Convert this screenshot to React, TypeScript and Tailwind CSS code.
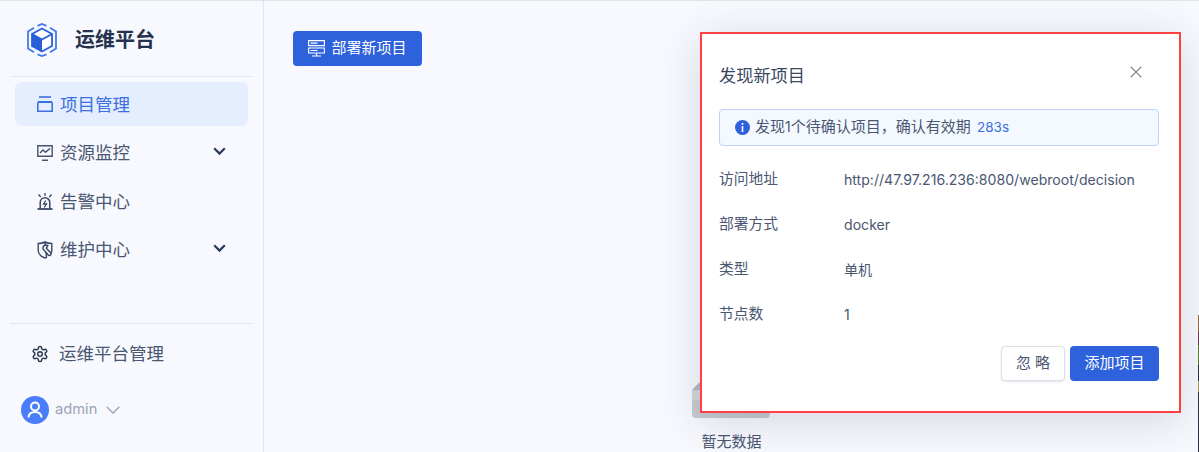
import React from "react";

const font = { fontFamily: '"Inter","Noto Sans CJK SC",sans-serif' };

function Chevron() {
  return (
    <svg width="13" height="9" viewBox="0 0 13 9" className="mb-[3px] text-[#2a3a5c]">
      <path d="M1.200 1.300 6.500 6.600l5.300-5.300" fill="none" stroke="currentColor" strokeWidth="2.200" />
    </svg>
  );
}

function NavItem({ icon, label, chevron, active }: { icon: React.ReactNode; label: string; chevron?: boolean; active?: boolean }) {
  return (
    <div className={`flex h-11 items-center rounded-md pl-[22px] pr-[22px] text-[17.500px] ${active ? "bg-[#e4eefe] text-[#3c6fe0]" : "text-[#4a5772]"}`}>
      <span className="flex w-[16px] justify-center">{icon}</span>
      <span className="ml-[7px] flex-1 pt-[1px] leading-none">{label}</span>
      {chevron && <Chevron />}
    </div>
  );
}

export default function App() {
  return (
    <div style={font} className="relative flex h-[452px] w-[1199px] overflow-hidden border-t border-[#e2e3e5] bg-[#f8f9fe]">
      <aside className="flex w-[264px] shrink-0 flex-col border-r border-[#e3e5ec]">
        <div className="mx-[10px] flex h-[76px] items-center border-b border-[#e8eaf0] pl-[17px] pt-[2px]">
          <svg width="30" height="34" viewBox="0 0 30 34">
            <path d="M10.500 2.800 15 1l4.500 1.800M23 4.800 29 8.500v17l-6 3.700M19.500 31.300 15 33l-4.500-1.700M7 29.200 1 25.500v-17l6-3.700" fill="none" stroke="#4378ee" strokeWidth="1.800" />
            <path d="M15 5.500 25 11v12l-10 5.500L5 23V11z" fill="#fff" stroke="#2a5fd8" strokeWidth="1.800" />
            <path d="M5 11l10 5.500v12L5 23z" fill="#2a5fd8" />
            <path d="M5 11l10 5.500L25 11" fill="none" stroke="#2a5fd8" strokeWidth="1.800" />
          </svg>
          <span className="ml-[18px] text-[20px] font-bold text-[#25324f]">运维平台</span>
        </div>
        <nav className="mx-[15px] mt-[5px] flex flex-col gap-[4.500px]">
          <NavItem
            active
            label="项目管理"
            icon={
              <svg width="16" height="16" viewBox="0 0 16 16" fill="none" stroke="#3c6fe0" strokeWidth="1.600">
                <path d="M2 1h12" />
                <path d="M.8 6.500V15.200h14.400V6.500" />
                <path d="M.8 6h14.400" strokeWidth="2" />
              </svg>
            }
          />
          <NavItem
            label="资源监控"
            chevron
            icon={
              <svg width="16" height="16" viewBox="0 0 16 16" fill="none" stroke="#46536f" strokeWidth="1.400">
                <path d="M.8.800h14.400v10.400H.8z" />
                <path d="M5 15.300h6" strokeWidth="1.600" />
                <path d="M3 8l3-3 2.500 2.200L13 3.500" strokeWidth="1.500" />
              </svg>
            }
          />
          <NavItem
            label="告警中心"
            icon={
              <svg width="16" height="17" viewBox="0 0 16 17" fill="none" stroke="#3a4763" strokeWidth="1.500">
                <path d="M3.200 15.500V9.500a4.800 4.800 0 0 1 9.600 0v6" />
                <path d="M.5 16h15" strokeWidth="1.800" />
                <path d="M8 0v3M1.500 1.500l2.200 2.500M14.500 1.500l-2.200 2.500" strokeWidth="1.300" />
                <path d="M8.800 7.500 6.500 11h3L7.200 14.500" strokeWidth="1.300" />
              </svg>
            }
          />
          <NavItem
            label="维护中心"
            chevron
            icon={
              <svg width="16" height="18" viewBox="0 0 16 18" fill="none" stroke="#3a4763" strokeWidth="1.400">
                <path d="M8 1c2 1 4 1.500 6.800 1.500V9c0 1.200-.3 2.300-.8 3.300M9.500 16.300 8 17c-3.800-1.300-6.800-4.200-6.800-8V2.500C4 2.500 6 2 8 1z" />
                <path d="M10.800 4.700a3 3 0 0 0-4.600 3.500l5 5.800c.6.700 1.500.7 2.100.1l.3-.3c.6-.6.6-1.400 0-2l-4.300-4.600 1.500-2.500z" fill="#f8f9fe" strokeWidth="1.500" />
              </svg>
            }
          />
        </nav>
        <div className="mx-[10px] mt-[51px] border-t border-[#e3e5ec] pt-[21px]">
          <div className="flex items-center pl-[21px] text-[17.500px] leading-none text-[#4a5772]">
            <svg width="18" height="18" viewBox="0 0 24 24" fill="none" stroke="#2f3b55" strokeWidth="2">
              <path d="M12.220 2h-.440a2 2 0 0 0-2 2v.180a2 2 0 0 1-1 1.730l-.430.250a2 2 0 0 1-2 0l-.150-.080a2 2 0 0 0-2.730.730l-.220.380a2 2 0 0 0 .730 2.730l.150.100a2 2 0 0 1 1 1.720v.510a2 2 0 0 1-1 1.740l-.150.090a2 2 0 0 0-.730 2.730l.220.380a2 2 0 0 0 2.730.730l.150-.080a2 2 0 0 1 2 0l.430.250a2 2 0 0 1 1 1.730V20a2 2 0 0 0 2 2h.440a2 2 0 0 0 2-2v-.180a2 2 0 0 1 1-1.730l.430-.250a2 2 0 0 1 2 0l.150.080a2 2 0 0 0 2.730-.730l.220-.390a2 2 0 0 0-.730-2.730l-.150-.080a2 2 0 0 1-1-1.740v-.500a2 2 0 0 1 1-1.740l.150-.090a2 2 0 0 0 .730-2.730l-.220-.380a2 2 0 0 0-2.730-.730l-.150.080a2 2 0 0 1-2 0l-.430-.250a2 2 0 0 1-1-1.730V4a2 2 0 0 0-2-2z" />
              <circle cx="12" cy="12" r="3" />
            </svg>
            <span className="ml-[10px]">运维平台管理</span>
          </div>
          <div className="ml-[11px] mt-[33px] flex items-center">
            <svg width="28" height="28" viewBox="0 0 28 28">
              <circle cx="14" cy="14" r="14" fill="#4a7dfb" />
              <circle cx="14" cy="10.500" r="4" fill="none" stroke="#fff" strokeWidth="2" />
              <path d="M7.500 21.500c.3-3.700 2.700-5.500 6.500-5.500s6.200 1.800 6.500 5.500" fill="none" stroke="#fff" strokeWidth="2" />
            </svg>
            <span className="ml-[6px] text-[14.700px] text-[#9aa3b5]">admin</span>
            <svg width="14" height="8" viewBox="0 0 14 8" className="ml-[9px]">
              <path d="M.7.700 7 7l6.300-6.300" fill="none" stroke="#9aa3b5" strokeWidth="1.300" />
            </svg>
          </div>
        </div>
      </aside>

      <main className="flex flex-1 flex-col">
        <div className="ml-[29px] mt-[30px]">
          <button className="flex h-[35px] w-[129px] items-center justify-center rounded bg-[#2d62dc] text-[15px] text-white">
            <svg width="17" height="17" viewBox="0 0 17 17" fill="none" stroke="#fff" strokeWidth="1.100" className="mr-[6px]">
              <path d="M.6.600h15.800v5H.6zM.6 8h15.800v5H.6zM8.500 13v2.500M4 16h9M2.500 3.100h7M2.500 10.500h7" />
            </svg>
            部署新项目
          </button>
        </div>
        <div className="mt-[314px] flex flex-col items-center">
          <svg width="78" height="38" viewBox="0 0 78 38" className="ml-[-1px]">
            <path d="M10 0 0 10v24a4 4 0 0 0 4 4h70a4 4 0 0 0 4-4V0z" fill="#c6cacf" />
            <path d="M10 0 0 10h10z" fill="#b4b8be" />
            <path d="M0 10h10v10H0z" fill="#d2d5d9" />
          </svg>
          <div className="mt-[14px] text-[15px] leading-[20px] text-[#4a5772]">暂无数据</div>
        </div>
      </main>

      <div className="absolute right-0 top-[314px] flex h-[137px] w-px flex-col bg-[#2a3040]">
        <div className="h-[17px] bg-[#8a6a4a]" />
        <div className="h-[13px] bg-[#6a3a4a]" />
        <div className="h-[20px] bg-[#5a7a3a]" />
        <div className="h-[16px] bg-[#2a3040]" />
        <div className="h-[11px] bg-[#a89a70]" />
      </div>

      <div className="absolute left-[700px] top-[31px] h-[381px] w-[481px] border-2 border-[#ff3f42] bg-white pl-[17px] pr-[20px] pt-[30px] shadow-[0_8px_40px_rgba(30,40,70,0.16)]">
        <div className="flex items-center justify-between pr-[17px]">
          <span className="text-[17.200px] leading-[24px] text-[#3a4763]">发现新项目</span>
          <svg width="12" height="12" viewBox="0 0 12 12" className="mb-[8px]">
            <path d="M.7.700l10.600 10.600M11.300.700.700 11.300" stroke="#868d9e" strokeWidth="1.300" />
          </svg>
        </div>
        <div className="mt-[21px] flex h-[37px] items-center rounded border border-[#bcd4fb] bg-[#f4f9ff] pl-[15px] text-[15px] text-[#4a5772]">
          <svg width="15" height="15" viewBox="0 0 15 15">
            <circle cx="7.500" cy="7.500" r="7.500" fill="#2d62dc" />
            <rect x="6.700" y="3" width="1.600" height="1.800" fill="#fff" />
            <rect x="6.700" y="6" width="1.600" height="6" fill="#fff" />
          </svg>
          <span className="ml-[5px]">发现<span className="text-[14px]">1</span>个待确认项目，确认有效期 <span className="ml-[2px] text-[13.500px] text-[#3c6fe0]">283s</span></span>
        </div>
        <dl className="mt-[11px] text-[14.750px] text-[#4a5772]">
          {[
            ["访问地址", "http://47.97.216.236:8080/webroot/decision"],
            ["部署方式", "docker"],
            ["类型", "单机"],
            ["节点数", "1"],
          ].map(([k, v]) => (
            <div key={k} className="flex h-[45px] items-center">
              <dt className="w-[125px]">{k}</dt>
              <dd className="text-[14.100px]">{v}</dd>
            </div>
          ))}
        </dl>
        <div className="mt-[9px] flex justify-end gap-[5px]">
          <button className="h-[35px] w-[64px] rounded border border-[#dcdfec] bg-white text-[15px] text-[#4a5772] shadow-[0_1px_2px_rgba(60,70,120,0.15)]">忽 略</button>
          <button className="h-[35px] w-[89px] rounded bg-[#2d62dc] text-[15px] text-white">添加项目</button>
        </div>
      </div>
    </div>
  );
}
